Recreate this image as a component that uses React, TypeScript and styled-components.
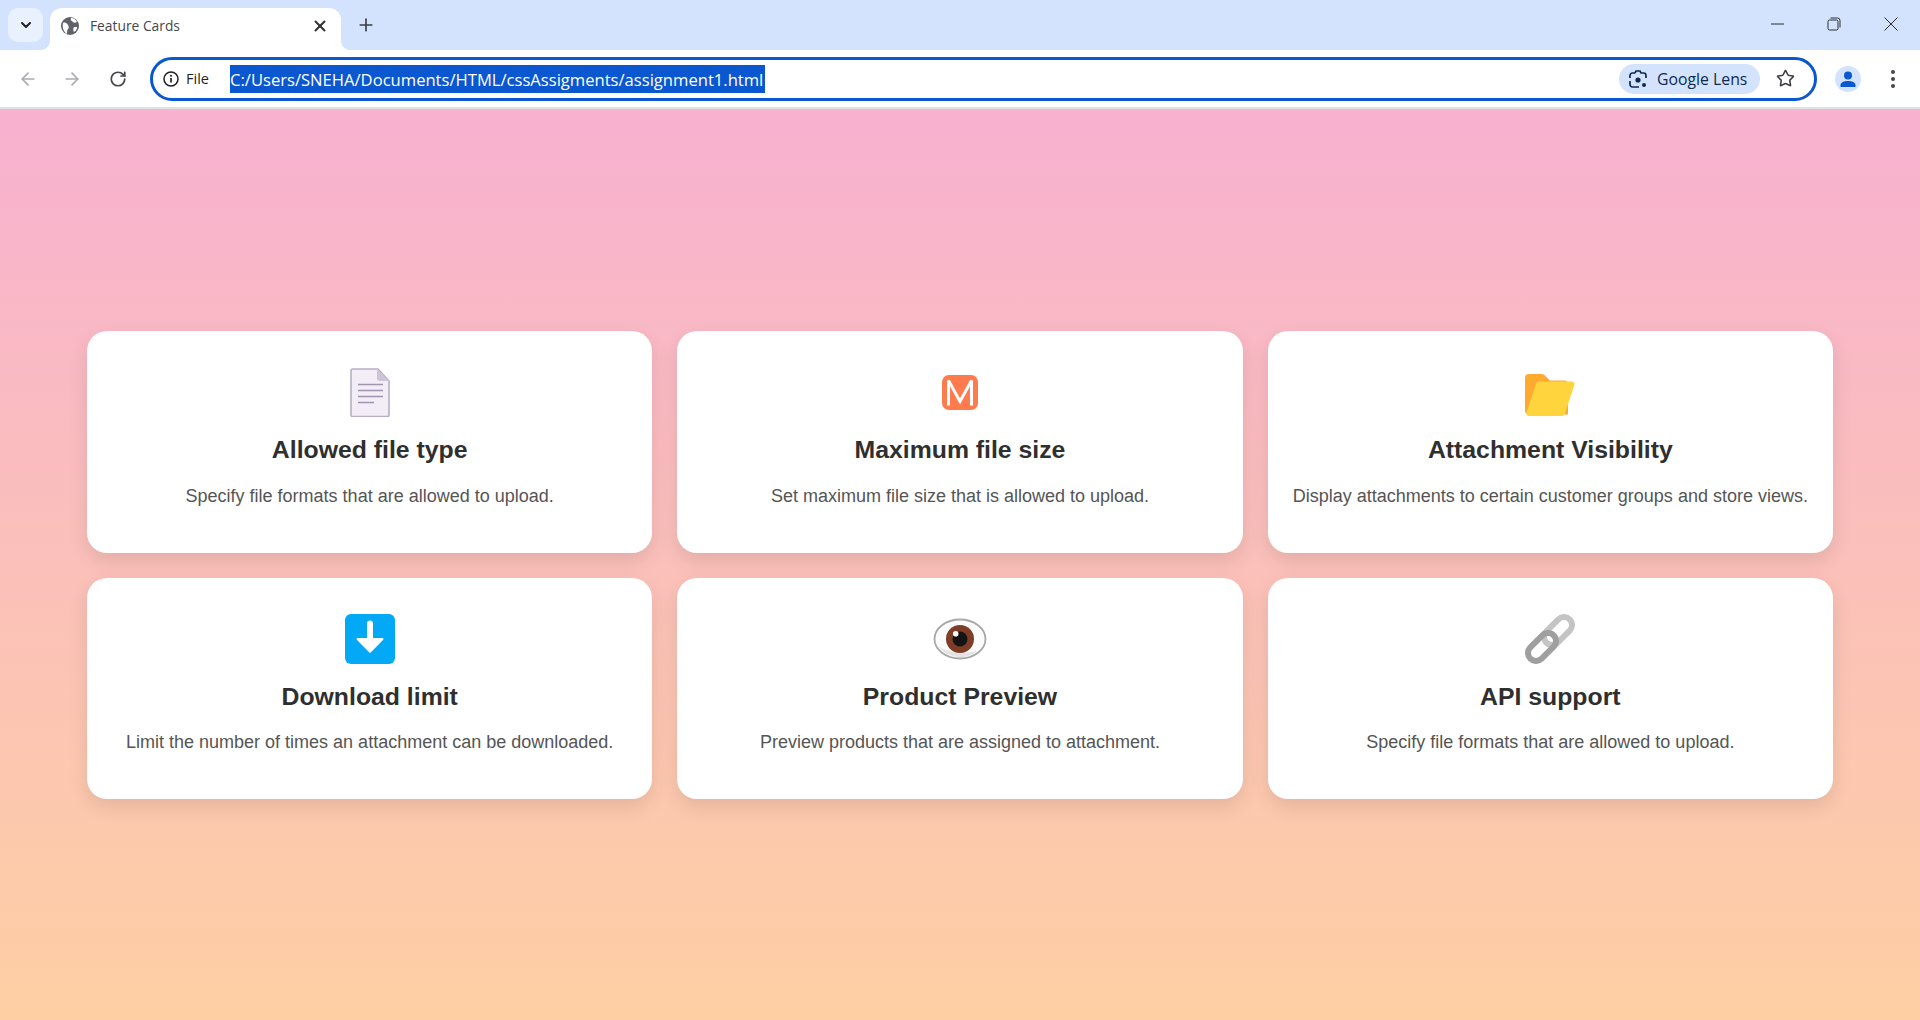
import React from 'react';
import styled, { createGlobalStyle } from 'styled-components';
import { ArrowLeft, ArrowRight, ChevronDown, Plus, RotateCw, Star, X } from 'lucide-react';

const GlobalStyle = createGlobalStyle`
  html, body {
    margin: 0;
    padding: 0;
    height: 100%;
  }
  #root {
    height: 100%;
  }
`;

const Page = styled.div`
  height: 1020px;
  display: flex;
  flex-direction: column;
  overflow: hidden;
  font-family: "Liberation Sans", Arial, sans-serif;
`;

const TabStrip = styled.div`
  height: 50px;
  background: #d3e3fd;
  display: flex;
  align-items: flex-start;
  padding: 8px 0 0 8px;
  box-sizing: border-box;
  color: #1f1f1f;
`;

const TabSearch = styled.div`
  width: 35px;
  height: 34px;
  border-radius: 10px;
  background: #e9f1fe;
  display: flex;
  align-items: center;
  justify-content: center;
`;

const Tab = styled.div`
  position: relative;
  width: 291px;
  height: 42px;
  margin-left: 7px;
  padding: 0 12px 7px 11px;
  box-sizing: border-box;
  background: #fff;
  border-radius: 12px 12px 0 0;
  display: flex;
  align-items: center;
  &::before,
  &::after {
    content: '';
    position: absolute;
    bottom: 0;
    width: 10px;
    height: 10px;
  }
  &::before {
    left: -10px;
    background: radial-gradient(circle at 0 0, transparent 10px, #fff 10.5px);
  }
  &::after {
    right: -10px;
    background: radial-gradient(circle at 100% 0, transparent 10px, #fff 10.5px);
  }
`;

const TabTitle = styled.span`
  margin-left: 11px;
  flex: 1;
  font-family: "Open Sans", sans-serif;
  font-size: 13.8px;
  color: #45474a;
`;

const NewTab = styled.div`
  margin: 7px 0 0 15px;
  width: 20px;
  height: 20px;
  display: flex;
  color: #3c3f43;
`;

const WindowControls = styled.div`
  margin-left: auto;
  display: flex;
  align-items: center;
  height: 34px;
  margin-top: -1px;
`;

const WindowButton = styled.div<{ $width: number }>`
  width: ${(p) => p.$width}px;
  display: flex;
  justify-content: center;
`;

const Toolbar = styled.div`
  height: 57px;
  background: #fff;
  border-radius: 12px 12px 0 0;
  margin-top: 0;
  display: flex;
  align-items: center;
  padding-left: 10px;
  box-sizing: border-box;
  flex-shrink: 0;
`;

const NavButton = styled.div<{ $muted?: boolean; $gap: number }>`
  width: 36px;
  height: 36px;
  margin-right: ${(p) => p.$gap}px;
  display: flex;
  align-items: center;
  justify-content: center;
  color: ${(p) => (p.$muted ? '#a8abb0' : '#45474a')};
`;

const Omnibox = styled.div`
  width: 1667px;
  height: 44px;
  margin-left: -2px;
  border: 3px solid #0b57d0;
  border-radius: 22px;
  box-sizing: border-box;
  background: #fff;
  display: flex;
  align-items: center;
  padding: 0 4px 0 10px;
`;

const FileLabel = styled.span`
  margin-left: 7px;
  width: 44px;
  font-family: "Open Sans", sans-serif;
  font-size: 14.500px;
  font-weight: 500;
  color: #1f1f1f;
`;

const UrlSelection = styled.span`
  background: #0b57d0;
  color: #fff;
  height: 28px;
  line-height: 29px;
  width: 535px;
  font-family: "Open Sans", sans-serif;
  font-size: 16.600px;
  white-space: nowrap;
  overflow: hidden;
`;

const LensPill = styled.div`
  margin-left: auto;
  margin-top: 1px;
  width: 141px;
  height: 30px;
  border-radius: 15px;
  background: #d3e3fd;
  display: flex;
  align-items: center;
  padding-left: 10px;
  box-sizing: border-box;
  color: #0e2a52;
  font-family: "Open Sans", sans-serif;
  font-size: 15.800px;
  gap: 10px;
`;

const StarButton = styled.div`
  width: 50px;
  display: flex;
  justify-content: center;
  color: #3c3f43;
`;

const Avatar = styled.div`
  width: 26px;
  height: 26px;
  margin-left: 18px;
  border-radius: 50%;
  background: #d3e3fd;
  display: flex;
  align-items: center;
  justify-content: center;
`;

const MenuDots = styled.div`
  margin-left: 30px;
  display: flex;
  flex-direction: column;
  gap: 3px;
  i {
    width: 4px;
    height: 4px;
    border-radius: 50%;
    background: #45474a;
    display: block;
  }
`;

const Divider = styled.div`
  height: 2px;
  background: #e1e3e1;
  flex-shrink: 0;
`;

const Content = styled.main`
  flex: 1;
  background: linear-gradient(to bottom, #f8b1d0, #fecfa3);
  display: flex;
  align-items: center;
  padding: 1px 87px 0;
`;

const CardGrid = styled.div`
  flex: 1;
  display: grid;
  grid-template-columns: repeat(3, 1fr);
  gap: 25px;
`;

const Card = styled.section`
  height: 221.500px;
  padding-top: 36px;
  box-sizing: border-box;
  background: #fff;
  border-radius: 20px;
  box-shadow: 0 8px 20px rgba(0, 0, 0, 0.1);
  text-align: center;
`;

const IconBox = styled.div`
  width: 50px;
  height: 50px;
  margin: 0 auto;
  svg {
    display: block;
  }
`;

const CardTitle = styled.h3`
  margin: 19px 0 0;
  font-size: 24.800px;
  line-height: 28px;
  font-weight: 700;
  color: #2f2f2f;
`;

const CardText = styled.p`
  margin: 21.500px 0 0;
  font-size: 18px;
  line-height: 20px;
  color: #555;
`;

const DocIcon = () => (
  <svg width="50" height="50" viewBox="0 0 50 50">
    <path d="M8 2h25l11 12v34a1.500 1.500 0 0 1-1.500 1.500h-35A1.500 1.500 0 0 1 6 48V4a2 2 0 0 1 2-2z" fill="#f3edf8" stroke="#b9aec6" strokeWidth="1.6" />
    <path d="M32 2l12 12h-9a3 3 0 0 1-3-3z" fill="#cdc4d9" />
    <path d="M13 17.500h25M13 23.500h25M13 29.500h25M13 35.500h16" stroke="#a295ad" strokeWidth="1.700" />
  </svg>
);

const MaxIcon = () => (
  <svg width="50" height="50" viewBox="0 0 50 50">
    <rect x="7" y="8" width="36" height="35" rx="7" fill="#ff7a4d" />
    <path d="M13.500 38.500V13.500l11.500 21 11.500-21v25" fill="none" stroke="#fff" strokeWidth="3" />
  </svg>
);

const FolderIcon = () => (
  <svg width="50" height="50" viewBox="0 0 50 50">
    <g transform="translate(0 1)">
      <path d="M0 10a4 4 0 0 1 4-4h13a4 4 0 0 1 3 1.500l5 5h14a4 4 0 0 1 4 4v30H4a4 4 0 0 1-4-4z" fill="#ffa92e" />
      <path d="M11 16a3 3 0 0 1 3-2.500h33a2.500 2.500 0 0 1 2.400 3.300L40 45.500a3 3 0 0 1-2.800 2.500H4a3.500 3.500 0 0 1-2.800-2.500z" fill="#ffd43d" />
    </g>
  </svg>
);

const DownloadIcon = () => (
  <svg width="50" height="50" viewBox="0 0 50 50">
    <rect x="0" y="0" width="50" height="50" rx="6" fill="#03a9f4" />
    <path d="M22 9.500a3 3 0 0 1 6 0V24h9.500a1 1 0 0 1 .7 1.700L25.700 38.500a1 1 0 0 1-1.400 0L11.800 25.700a1 1 0 0 1 .7-1.700H22z" fill="#fff" />
  </svg>
);

const EyeIcon = () => (
  <svg width="54" height="50" viewBox="0 0 54 50" style={{ marginLeft: -2 }}>
    <ellipse cx="27" cy="25" rx="25.500" ry="19.500" fill="#fbfbfb" stroke="#a8a8a8" strokeWidth="1.800" />
    <path d="M5 32c6 7 13 11 22 11 7 0 12-2 17-6-14 3-28 2-39-5z" fill="#e4e4e4" />
    <circle cx="27" cy="25" r="14" fill="#7e3d27" />
    <circle cx="27" cy="25" r="7.500" fill="#141414" />
    <circle cx="22.700" cy="19.700" r="2.800" fill="#fff" />
  </svg>
);

const LinkIcon = () => (
  <svg width="50" height="50" viewBox="0 0 50 50">
    <rect x="16.500" y="9" width="33" height="16" rx="8" transform="rotate(-45 33 17)" fill="none" stroke="#c4c4c4" strokeWidth="6" />
    <rect x="0.500" y="25" width="33" height="16" rx="8" transform="rotate(-45 17 33)" fill="none" stroke="#9f9f9f" strokeWidth="6" />
  </svg>
);

const features = [
  { icon: <DocIcon />, title: 'Allowed file type', text: 'Specify file formats that are allowed to upload.' },
  { icon: <MaxIcon />, title: 'Maximum file size', text: 'Set maximum file size that is allowed to upload.' },
  { icon: <FolderIcon />, title: 'Attachment Visibility', text: 'Display attachments to certain customer groups and store views.' },
  { icon: <DownloadIcon />, title: 'Download limit', text: 'Limit the number of times an attachment can be downloaded.' },
  { icon: <EyeIcon />, title: 'Product Preview', text: 'Preview products that are assigned to attachment.' },
  { icon: <LinkIcon />, title: 'API support', text: 'Specify file formats that are allowed to upload.' },
];

const App = () => {
  return (
    <Page>
      <GlobalStyle />
      <TabStrip>
        <TabSearch>
          <ChevronDown size={16} strokeWidth={3} color="#1f1f1f" />
        </TabSearch>
        <Tab>
          <svg width="18" height="18" viewBox="0 0 18 18">
            <circle cx="9" cy="9" r="9" fill="#5f6368" />
            <path d="M2 6c2-1 4 0 5 2s1 3 0 4-1 3-1 5C3 15 1 11 2 6zM10 1c3 0 5 2 6 4-2 1-3 1-4 0s-3-2-2-4zM13 10l3 0c0 2-1 4-3 5-1-2-1-3 0-5z" fill="#fff" />
          </svg>
          <TabTitle>Feature Cards</TabTitle>
          <X size={18} strokeWidth={2.6} color="#303135" />
        </Tab>
        <NewTab>
          <Plus size={20} strokeWidth={2} />
        </NewTab>
        <WindowControls>
          <WindowButton $width={56}>
            <svg width="14" height="2" viewBox="0 0 14 2"><path d="M0 1h13" stroke="#2b2d30" strokeWidth="1" /></svg>
          </WindowButton>
          <WindowButton $width={55}>
            <svg width="14" height="14" viewBox="0 0 14 14" fill="none" stroke="#2b2d30">
              <rect x="1" y="3" width="10" height="10" rx="1.500" />
              <path d="M3.500 1h7A2.500 2.500 0 0 1 13 3.500v7" />
            </svg>
          </WindowButton>
          <WindowButton $width={59}>
            <svg width="14" height="14" viewBox="0 0 14 14"><path d="M.5.500l13 13M13.500.500l-13 13" stroke="#2b2d30" strokeWidth="1" /></svg>
          </WindowButton>
        </WindowControls>
      </TabStrip>
      <Toolbar>
        <NavButton $muted $gap={8}><ArrowLeft size={20} strokeWidth={2} /></NavButton>
        <NavButton $muted $gap={10}><ArrowRight size={20} strokeWidth={2} /></NavButton>
        <NavButton $gap={16}><RotateCw size={18} strokeWidth={2.3} /></NavButton>
        <Omnibox>
          <svg width="16" height="16" viewBox="0 0 16 16" fill="none">
            <circle cx="8" cy="8" r="7" stroke="#1f1f1f" strokeWidth="1.500" />
            <path d="M8 7v4.500" stroke="#1f1f1f" strokeWidth="1.700" />
            <circle cx="8" cy="4.700" r="1" fill="#1f1f1f" />
          </svg>
          <FileLabel>File</FileLabel>
          <UrlSelection>C:/Users/SNEHA/Documents/HTML/cssAssigments/assignment1.html</UrlSelection>
          <LensPill>
            <svg width="18" height="18" viewBox="0 0 18 18" fill="none">
              <path d="M6 3l1-2h4l1 2h2.500A2.500 2.500 0 0 1 17 5.500V8M1 8V5.500A2.500 2.500 0 0 1 3.500 3H6M1 11v3.500A2.500 2.500 0 0 0 3.500 17H10" stroke="#0e2a52" strokeWidth="1.700" />
              <circle cx="9" cy="10" r="2.600" fill="#0e2a52" />
              <circle cx="15" cy="15" r="2" fill="#0e2a52" />
            </svg>
            Google Lens
          </LensPill>
          <StarButton><Star size={19} strokeWidth={2} /></StarButton>
        </Omnibox>
        <Avatar>
          <svg width="18" height="18" viewBox="0 0 18 18">
            <circle cx="9" cy="5.500" r="4" fill="#0b57d0" />
            <path d="M1.500 17v-2c0-2.500 3.500-4 7.500-4s7.500 1.500 7.500 4v2z" fill="#0b57d0" />
          </svg>
        </Avatar>
        <MenuDots><i /><i /><i /></MenuDots>
      </Toolbar>
      <Divider />
      <Content>
        <CardGrid>
          {features.map((f) => (
            <Card key={f.title}>
              <IconBox>{f.icon}</IconBox>
              <CardTitle>{f.title}</CardTitle>
              <CardText>{f.text}</CardText>
            </Card>
          ))}
        </CardGrid>
      </Content>
    </Page>
  );
};

export default App;
